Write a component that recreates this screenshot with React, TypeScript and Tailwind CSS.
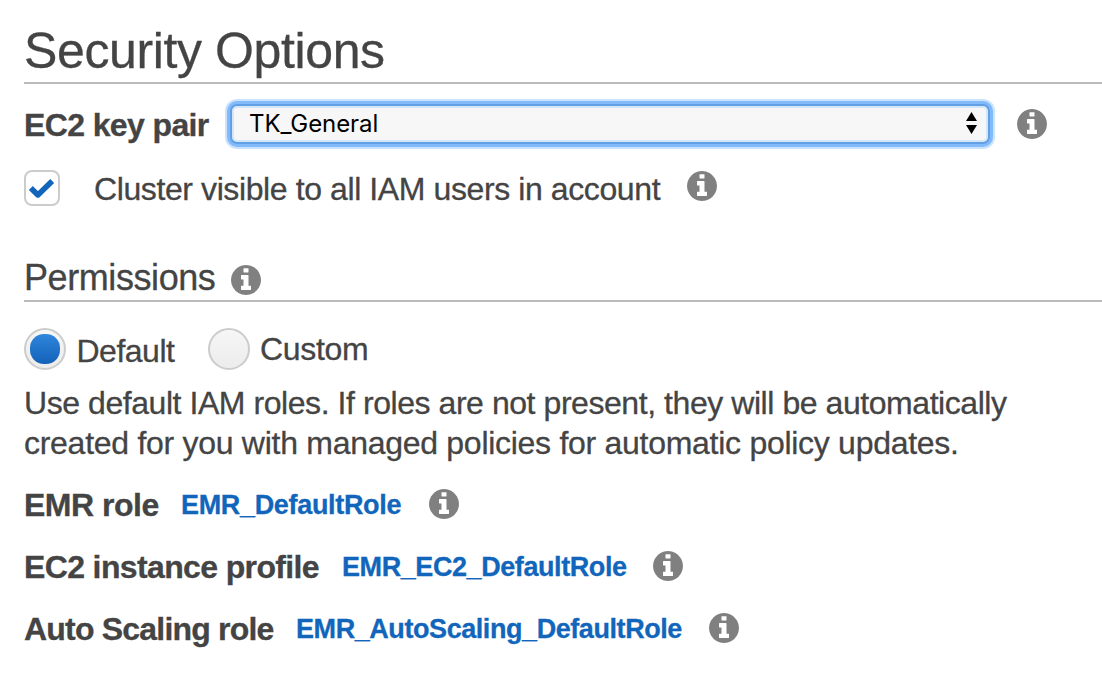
type RoleRow = {
  label: string;
  labelClass: string;
  role: string;
  roleClass: string;
};

const roles: RoleRow[] = [
  {
    label: "EMR role",
    labelClass: "w-[157px] tracking-[-0.5px]",
    role: "EMR_DefaultRole",
    roleClass: "w-[248px] tracking-[-0.33px]",
  },
  {
    label: "EC2 instance profile",
    labelClass: "w-[318px] tracking-[-0.63px]",
    role: "EMR_EC2_DefaultRole",
    roleClass: "w-[311px] tracking-[-0.42px]",
  },
  {
    label: "Auto Scaling role",
    labelClass: "w-[272px] tracking-[-0.8px]",
    role: "EMR_AutoScaling_DefaultRole",
    roleClass: "w-[413px] tracking-[-0.43px]",
  },
];

function InfoIcon({ className = "" }: { className?: string }) {
  return (
    <svg viewBox="0 0 1536 1536" className={"size-[30px] shrink-0 fill-[#808080] " + className} aria-hidden="true">
      <path d="M1024 1248v-160q0-14-9-23t-23-9h-96v-512q0-14-9-23t-23-9h-320q-14 0-23 9t-9 23v160q0 14 9 23t23 9h96v320h-96q-14 0-23 9t-9 23v160q0 14 9 23t23 9h448q14 0 23-9t9-23zm-128-896v-160q0-14-9-23t-23-9h-192q-14 0-23 9t-9 23v160q0 14 9 23t23 9h192q14 0 23-9t9-23zm640 416q0 209-103 385.5t-279.5 279.5-385.5 103-385.5-103-279.5-279.5-103-385.5 103-385.5 279.5-279.5 385.5-103 385.5 103 279.5 279.5 103 385.5z" />
    </svg>
  );
}

function Radio({ checked = false }: { checked?: boolean }) {
  return (
    <span className="flex size-[42px] shrink-0 items-center justify-center rounded-full border-2 border-[#cccccc] bg-linear-to-b from-[#f6f6f6] to-[#ececec]">
      {checked && <span className="size-[30px] rounded-[14px] bg-linear-to-b from-[#2f86dc] to-[#1262b8]" />}
    </span>
  );
}

export default function App() {
  return (
    <main className="h-[680px] overflow-hidden bg-white pt-[23px] pl-6 font-['Liberation_Sans',Arial,sans-serif] text-[32px] leading-10 whitespace-nowrap text-[#444444] [-webkit-text-stroke:0.3px]">
      <h1 className="h-[61px] border-b-2 border-[#bbbbbb] text-[50px] leading-14 tracking-[-0.38px]">Security Options</h1>

      <div className="mt-[15px] flex h-[50px] items-start">
        <label className="mt-1.5 w-[206px] shrink-0 font-bold tracking-[-0.62px]">EC2 key pair</label>
        <div className="mt-[5px] flex h-10 w-[760px] shrink-0 items-center justify-between rounded-[7px] border-2 border-[#629fe3] bg-[#f7f7f7] pr-[11px] pl-[17px] shadow-[0_0_0_3px_#82bbfc,0_0_0_5px_#cce3fd,inset_0_0_0_2px_#d3e6fb]">
          <span className="font-[Inter,sans-serif] text-2xl leading-9 tracking-[-0.08px] text-black [-webkit-text-stroke:0]">TK_General</span>
          <svg viewBox="0 0 11 22" className="mb-0.5 h-[22px] w-[11px] fill-black" aria-hidden="true">
            <path d="M5.5 0 11 9H0zM0 13h11l-5.5 9z" />
          </svg>
        </div>
        <InfoIcon className="mt-2.5 ml-[27px]" />
      </div>

      <div className="mt-5 flex h-10 items-start">
        <span className="mt-px flex size-9 shrink-0 items-center justify-center rounded-[8px] border-2 border-[#cccccc] bg-white">
          <svg viewBox="0 0 32 32" className="size-8 fill-none stroke-[#1166bb]" aria-hidden="true">
            <path d="M4.8 15.9 11.9 22.9 26.2 9.1" strokeWidth="5.6" strokeLinejoin="round" />
          </svg>
        </span>
        <label className="ml-[34px] w-[593px] shrink-0 tracking-[-0.4px]">Cluster visible to all IAM users in account</label>
        <InfoIcon className="mt-0.5" />
      </div>

      <div className="mt-[49px] flex h-11 items-start border-b-2 border-[#bbbbbb]">
        <h2 className="w-[207px] shrink-0 text-4xl leading-10 tracking-[-0.42px]">Permissions</h2>
        <InfoIcon className="mt-[7px]" />
      </div>

      <div className="mt-[26px] flex h-[42px] items-start">
        <Radio checked />
        <label className="mt-[3px] ml-[10.5px] w-[131.5px] shrink-0 tracking-[-0.5px]">Default</label>
        <Radio />
        <label className="mt-px ml-[10px] tracking-[-0.3px]">Custom</label>
      </div>

      <p className="mt-[13px] h-20">
        <span className="block tracking-[-0.44px]">Use default IAM roles. If roles are not present, they will be automatically</span>
        <span className="block tracking-[-0.28px]">created for you with managed policies for automatic policy updates.</span>
      </p>

      <div className="mt-[22px]">
        {roles.map((row) => (
          <div key={row.role} className="flex h-[62px] items-start font-bold">
            <span className={"shrink-0 " + row.labelClass}>{row.label}</span>
            <a className={"shrink-0 text-[27px] leading-10 text-[#1166bb] " + row.roleClass}>{row.role}</a>
            <InfoIcon className="mt-1" />
          </div>
        ))}
      </div>
    </main>
  );
}
